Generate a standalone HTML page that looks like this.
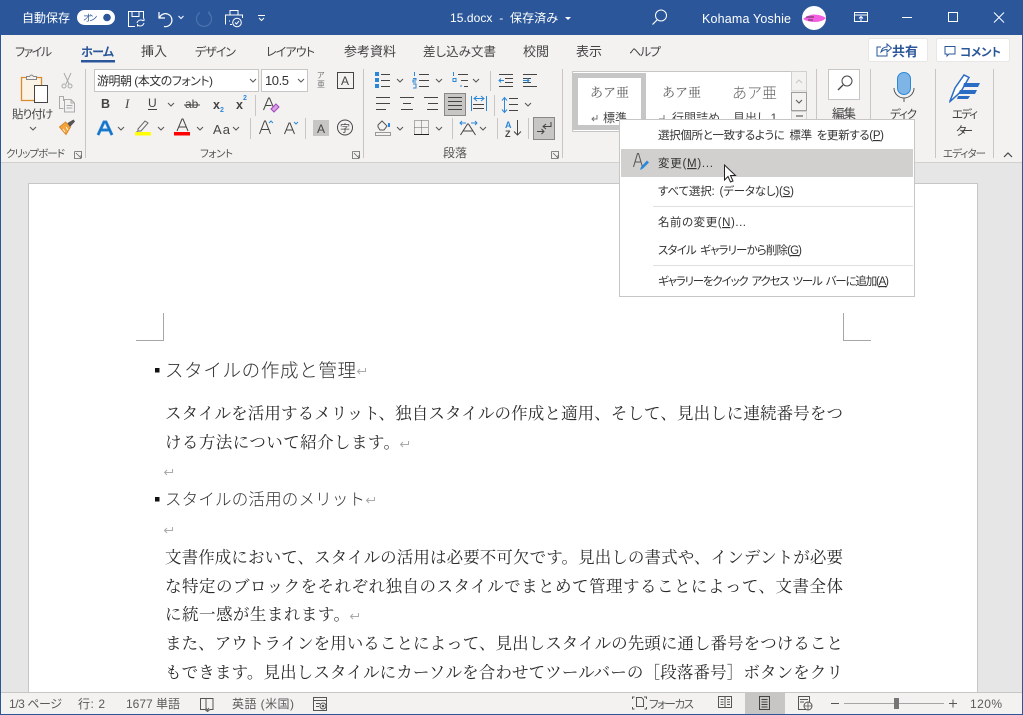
<!DOCTYPE html>
<html lang="ja"><head><meta charset="utf-8"><title>15.docx</title>
<style>
html,body{margin:0;padding:0;width:1023px;height:715px;overflow:hidden;background:#f3f2f1}
svg{display:block;position:absolute;left:0;top:0}
text{font-family:"Liberation Sans","Noto Sans CJK JP",sans-serif;font-size:12px;fill:#444;white-space:pre;font-feature-settings:"palt"}
.w{fill:#fff}
.d{font-family:"Liberation Serif","Noto Serif CJK JP","Noto Serif CJK SC",serif;font-size:16.5px;fill:#2b2b2b;font-feature-settings:normal}
.h{font-family:"Liberation Sans","Noto Sans CJK JP",sans-serif;font-weight:300;fill:#333;font-feature-settings:normal}
.m{fill:#333;font-size:11.5px;word-spacing:2px}
.st{fill:#5a5a5a;font-size:12px}
.gl{font-size:10.5px;fill:#555}
.l{fill:none;stroke:#444;stroke-width:1}
.r{fill:none;stroke:#aaa;stroke-width:1}
.sep{stroke:#c8c6c4;stroke-width:1;fill:none}
</style></head><body>
<svg width="1023" height="715" viewBox="0 0 1023 715" xmlns="http://www.w3.org/2000/svg">
<defs><g id="ret"><path d="M9.500 -6v3.500h-8M4 -5l-2.500 2.500 2.500 2.500" class="r"/></g>
<path id="cv" d="M0 0l3 3 3-3" fill="none" stroke="#555" stroke-width="1"/>
<path id="dl" d="M.5 .5h7v6.500M.5 .5v7h3.500M2 2l5 5M7 4v3.500h-3.500" fill="none" stroke="#666" stroke-width=".8"/></defs>
<!-- backgrounds -->
<rect width="1023" height="715" fill="#f3f2f1"/>
<rect width="1023" height="35" fill="#2b579a"/>
<rect y="162" width="1023" height="1" fill="#d2d0ce"/>
<rect y="163" width="1023" height="529" fill="#e6e6e6"/>
<rect x="28.500" y="183.500" width="949" height="520" fill="#fff" stroke="#c6c6c6"/>

<!-- title bar -->
<text x="22" y="22" class="w" textLength="48">自動保存</text>
<rect x="77" y="10" width="38" height="15" rx="7.500" fill="#fff"/>
<text x="83" y="21" style="font-size:9px;fill:#2b579a" textLength="14">オン</text>
<circle cx="107" cy="17.500" r="3.800" fill="#2b579a"/>
<g fill="none" stroke="#fff" stroke-width="1">
<path d="M135 26.500h-6.500v-15h15v7M132 11.500v5h7v-5"/>
<path d="M137 23a4 4 0 0 1 6.500-2M144 21v-2.500M144 23a4 4 0 0 1-6.500 2M137.500 24v2.500" stroke-width="1"/>
<path d="M159 12v6h6M159.500 17.500a6.500 6.500 0 1 1 4.500 9" stroke-width="1.200"/>
<path d="M178.500 16l2.500 2.500 2.500-2.500"/>
<path d="M208 12.500a7.500 7.500 0 1 1-8 0M209 11.500l1 4" stroke="#4d74b0" stroke-width="1.100"/>
<path d="M230 15v-4.500h8v4.500M225.500 24.500v-9.500h17v3M230 21h-1M230 24.500h2"/>
<circle cx="237" cy="22.500" r="4.300"/><path d="M235 22.500l1.500 1.500 2.500-3"/>
<path d="M258 15.500h7M259 18l2.500 2.500 2.500-2.500"/>
<circle cx="661" cy="15.500" r="5.500"/><path d="M657 20l-4.500 4.500" stroke-width="1.200"/>
<rect x="854.500" y="12.500" width="13" height="9"/><path d="M855 15h12M861 21v-4M859 18.500l2-2 2 2"/>
<path d="M902 17.500h10"/><rect x="948.500" y="12.500" width="9" height="9"/>
<path d="M994 12.500l10 10M1004 12.500l-10 10"/>
</g>
<text x="450" y="22" class="w" style="font-size:12px" textLength="108">15.docx  -  保存済み</text>
<path d="M565 17h6l-3 3z" fill="#fff"/>
<text x="702" y="23" class="w" style="font-size:12.500px" textLength="89">Kohama Yoshie</text>
<circle cx="814" cy="18" r="12" fill="#fff"/>
<path d="M803 19q5-4 10-4.500 8 0 13 3.500-4 4-11 4-7 0-12-3z" fill="#f25fe0"/>
<path d="M806 17h8M808 20h5" stroke="#222" stroke-width=".7"/>

<!-- tabs -->
<g>
<text x="15" y="56" style="font-size:12px" textLength="37">ファイル</text>
<text x="81" y="56" style="font-size:12px;font-weight:700;fill:#2b579a" textLength="33">ホーム</text>
<rect x="81" y="60" width="34" height="2.500" fill="#2b579a"/>
<text x="141" y="56" style="font-size:13px" textLength="26">挿入</text>
<text x="195" y="56" style="font-size:12px" textLength="41">デザイン</text>
<text x="266" y="56" style="font-size:12px" textLength="49">レイアウト</text>
<text x="344" y="56" style="font-size:13px" textLength="52">参考資料</text>
<text x="423" y="56" style="font-size:12.500px" textLength="73">差し込み文書</text>
<text x="523" y="56" style="font-size:13px" textLength="26">校閲</text>
<text x="576" y="56" style="font-size:13px" textLength="26">表示</text>
<text x="629" y="56" style="font-size:12px" textLength="32">ヘルプ</text>
</g>
<rect x="868.500" y="38.500" width="59" height="23" rx="1.500" fill="#fff" stroke="#e8e7e6"/>
<path d="M881 47h-4v9h10v-3M881 52q1-5 6-5v-3l4.500 4-4.500 4v-2.500q-3.500 0-6 2.500z" fill="none" stroke="#2b579a"/>
<text x="892" y="56" style="font-size:13px;font-weight:700;fill:#2b579a" textLength="26">共有</text>
<rect x="936.500" y="38.500" width="73" height="23" rx="1.500" fill="#fff" stroke="#e8e7e6"/>
<path d="M945 46.500h10v7.500h-6l-2 2v-2h-2z" fill="none" stroke="#2b579a"/>
<text x="960" y="56" style="font-size:11.500px;font-weight:700;fill:#2b579a" textLength="41">コメント</text>

<!-- group separators -->
<path d="M85.500 69v89M363.500 69v89M562.500 69v89M816.500 69v89M870.500 69v89M935.500 69v89M993.500 69v89" class="sep"/>

<!-- clipboard -->
<path d="M21.500 77.500h20v23h-20z" fill="#fbf3e6" stroke="#d98b2b" stroke-width="1.300"/>
<path d="M26.500 79v-2.500h3q2-3 4 0h3v3h-10z" fill="#f3f2f1" stroke="#888"/>
<rect x="34.500" y="85.500" width="13" height="17" fill="#fff" stroke="#444"/>
<text x="12" y="118" style="font-size:11.500px" textLength="41">貼り付け</text>
<use href="#cv" x="30" y="127"/>
<path d="M64 73l5 11M71 73l-5 11" stroke="#aaa" fill="none"/><circle cx="64" cy="86" r="2" fill="none" stroke="#aaa"/><circle cx="70" cy="86" r="2" fill="none" stroke="#aaa"/>
<path d="M63.500 101v-4.500h-4v12h4M64.500 99.500h6.500l3.500 3.500v9h-10zM71 99.500v3.500h3.500M66.500 105.500h6M66.500 108h6" fill="none" stroke="#aaa"/>
<path d="M59.500 127l6-5 5 5-4.500 7.500z" fill="#f3a53a" stroke="#d98b2b"/><path d="M63 129l2 3M66 127l2 3" stroke="#fff" stroke-width=".8"/><path d="M67.500 123l6-3.500 1.500 2-5 5.500z" fill="#555"/>
<text x="6" y="157" class="gl" textLength="59">クリップボード</text>
<use href="#dl" x="74" y="151"/>

<!-- font -->
<rect x="94.500" y="69.500" width="164" height="22" fill="#fff" stroke="#c8c6c4"/>
<text x="97" y="85" style="font-size:12px;fill:#333" textLength="116">游明朝 (本文のフォント)</text>
<use href="#cv" x="250" y="79"/>
<rect x="261.500" y="69.500" width="46" height="22" fill="#fff" stroke="#c8c6c4"/>
<text x="265" y="85" style="font-size:13px;fill:#333" textLength="24">10.5</text>
<use href="#cv" x="298" y="79"/>
<text x="317" y="78" style="font-size:8px;fill:#777">ア</text><text x="317" y="87" style="font-size:8px;fill:#777">亜</text>
<rect x="337.500" y="72.500" width="16" height="16" fill="none" stroke="#444"/>
<text x="341" y="85" style="font-size:12px">A</text>
<text x="101" y="108" style="font-size:12.500px;font-weight:700">B</text>
<text x="125" y="108" style="font-family:'Liberation Serif',serif;font-size:13px;font-style:italic">I</text>
<text x="148" y="107" style="font-size:12px">U</text><path d="M148 109.500h9" stroke="#444"/>
<use href="#cv" x="168" y="103"/>
<text x="185" y="108" style="font-size:12px">ab</text><path d="M184 105h16" stroke="#444"/>
<text x="213" y="109" style="font-size:12.500px;font-weight:700">x</text><text x="220" y="112" style="font-size:7px;fill:#2b88d8;font-weight:700">2</text>
<text x="236" y="109" style="font-size:12.500px;font-weight:700">x</text><text x="243" y="100" style="font-size:7px;fill:#2b88d8;font-weight:700">2</text>
<path d="M263.500 110l5-12h1l5 12M265.500 105.500h6" class="l"/><path d="M271 109l5-5 3 3-5 5z" fill="#d9a0e6" stroke="#a347ba"/>
<path d="M98 135l6-13h2l6 13M100.500 130h9" fill="none" stroke="#2b88d8" stroke-width="3"/>
<path d="M98 135l6-13h2l6 13M100.500 130h9" fill="none" stroke="#0e6cbd" stroke-width="1"/>
<use href="#cv" x="118" y="127"/>
<path d="M138 129l7-8 3 2-7 8h-3zM138 131l-1.500 1" fill="none" stroke="#666"/><rect x="135" y="132" width="16" height="3.500" fill="#ffff00"/>
<use href="#cv" x="158" y="127"/>
<path d="M177 131l5-12h1l5 12M178.500 127h8" class="l"/><rect x="174" y="132" width="16" height="3.500" fill="#f00"/>
<use href="#cv" x="197" y="127"/>
<text x="213" y="134" style="font-size:13px" textLength="17">Aa</text>
<use href="#cv" x="233" y="127"/>
<path d="M255.500 95v21M250.500 118v21M305.500 118v21" class="sep"/>
<path d="M259.500 134l5-13h1l5 13M261.500 129.500h8" class="l"/><path d="M269 123l2-2 2 2" fill="none" stroke="#2b88d8"/>
<path d="M284.500 134l4.500-11h1l4.500 11M286 130h7" class="l"/><path d="M294 122l2 2 2-2" fill="none" stroke="#2b88d8"/>
<rect x="313" y="120" width="16" height="16" fill="#c8c6c4"/><text x="317" y="133" style="font-size:12px">A</text>
<circle cx="345" cy="127.500" r="7.500" fill="none" stroke="#444"/><text x="340" y="132" style="font-size:10px">字</text>
<text x="200" y="157" class="gl" textLength="33">フォント</text>
<use href="#dl" x="352" y="151"/>

<!-- paragraph -->
<g>
<path d="M375 72h4v4h-4zM375 78h4v4h-4zM375 84h4v4h-4z" fill="#2b88d8"/>
<path d="M381 74.500h9M381 80.500h9M381 86.500h9M419 74.500h10M419 80.500h10M419 86.500h10M458 74.500h10M461 80.500h7M464 86.500h4" class="l"/>
<path d="M414.500 72v4M413 78.500h3v1.500h-3v2h3M413 84h3v4h-3" stroke="#2b88d8" fill="none"/>
<path d="M453.500 72v4" stroke="#2b88d8"/><path d="M453 78.500h3v3h-3zM461 85v2" stroke="#2b88d8" fill="none"/>
<use href="#cv" x="397" y="79"/><use href="#cv" x="436" y="79"/><use href="#cv" x="473" y="79"/>
<path d="M490.500 71v20" class="sep"/>
<path d="M499 74.500h14M505 78.500h8M505 82.500h8M499 86.500h14M523 74.500h14M523 78.500h8M523 82.500h8M523 86.500h14" class="l"/>
<path d="M499 80.500h5M501 78.500l-2 2 2 2" stroke="#2b88d8" fill="none"/><path d="M523 80.500h6M527 78.500l2 2-2 2" stroke="#2b88d8" fill="none"/>
<rect x="444.500" y="93.500" width="21" height="22" fill="#c8c6c4" stroke="#8a8886"/>
<path d="M376 97.500h14M376 103.500h14M376 109.500h10M400 97.500h14M403 103.500h8M401 109.500h12M424 97.500h14M428 103.500h10M427 109.500h11M448 97.500h14M448 101.500h14M448 105.500h14M448 109.500h14" class="l"/>
<path d="M471.500 96v15M486.500 96v15" stroke="#2b88d8"/><path d="M474 98.500h10M477 96l-3 2.500 3 2.500M481 96l3 2.500-3 2.500" fill="none" stroke="#2b88d8"/>
<path d="M473 104.500h11M473 108.500h11" class="l"/>
<path d="M494.500 95v21" class="sep"/>
<path d="M504.500 98v14M502 100.500l2.500-3 2.500 3M502 109.500l2.500 3 2.500-3" fill="none" stroke="#2b88d8"/>
<path d="M509 98.500h9M509 104.500h9M509 110.500h9" class="l"/>
<use href="#cv" x="525" y="103"/>
<path d="M378 125l4-4 5 5-3 4h-4l-2-3z" fill="none" stroke="#555"/><path d="M389 123v4" stroke="#2b88d8" stroke-width="2"/>
<rect x="375.500" y="132.500" width="15" height="3" fill="#f3f2f1" stroke="#999"/>
<use href="#cv" x="397" y="127"/>
<path d="M414.500 120.500h14v14h-14zM421.500 120.500v14M414.500 127.500h14" fill="none" stroke="#666" stroke-dasharray="1 1"/><path d="M414 134.500h15" stroke="#222"/>
<use href="#cv" x="436" y="127"/>
<path d="M452.500 118v21" class="sep"/>
<path d="M460.500 135l7-11h1l7 11M463.500 131h9" class="l"/><path d="M460 123h6M471 123h6" stroke="#2b88d8"/><path d="M462 121l-2 2 2 2M475 121l2 2-2 2" fill="none" stroke="#2b88d8"/>
<use href="#cv" x="480" y="127"/>
<path d="M497.500 118v21" class="sep"/>
<text x="505" y="128" style="font-size:9px;font-weight:700;fill:#2b88d8">A</text><text x="505" y="137" style="font-size:9px;font-weight:700">Z</text>
<path d="M517.500 120v15M514 131.500l3.500 3.500 3.500-3.500" fill="none" stroke="#444"/>
<path d="M528.500 118v21" class="sep"/>
<rect x="533.500" y="117.500" width="21" height="22" fill="#c8c6c4" stroke="#8a8886"/>
<path d="M551 122v4.500h-7M546 124l-3 2.500 3 2.500M537 131.500h7M541.500 129l2.500 2.500-2.500 2.500" fill="none" stroke="#444"/>
<text x="443" y="157" style="font-size:12px;fill:#555" textLength="24">段落</text>
<use href="#dl" x="551" y="151"/>
</g>

<!-- gallery -->
<rect x="572.500" y="71.500" width="234" height="60" fill="#fff" stroke="#c8c6c4"/>
<rect x="575.500" y="75.500" width="68" height="52" fill="#fff" stroke="#c6c6c6" stroke-width="5"/>
<text x="590" y="97" class="d" style="font-size:13px;fill:#555">あア亜</text>
<text x="662" y="97" class="d" style="font-size:13px;fill:#555">あア亜</text>
<text x="732" y="98" class="h" style="font-size:15px;fill:#666">あア亜</text>
<path d="M597 115v4h-5M594 117l-2 2 2 2" fill="none" stroke="#777"/><text x="603" y="122" style="font-size:12px" textLength="24">標準</text>
<path d="M664 115v4h-5" fill="none" stroke="#777"/><text x="672" y="122" style="font-size:12px">行間詰め</text>
<text x="733" y="122" style="font-size:12px">見出し 1</text>
<rect x="791.500" y="71.500" width="15" height="19.500" fill="#f3f2f1" stroke="#d2d0ce"/><path d="M796 83l3-3 3 3" fill="none" stroke="#c8c6c4"/>
<rect x="791.500" y="92.500" width="15" height="18" fill="#f3f2f1" stroke="#a19f9d"/><use href="#cv" x="796" y="100"/>
<rect x="791.500" y="111.500" width="15" height="18" fill="#f3f2f1" stroke="#d2d0ce"/><path d="M796 116h7" stroke="#444"/>

<!-- right groups -->
<rect x="828.500" y="69.500" width="31" height="30" fill="#fff" stroke="#c8c6c4"/>
<circle cx="847" cy="81" r="5" fill="none" stroke="#444"/><path d="M843 85l-5 5" stroke="#444" stroke-width="1.300"/>
<text x="832" y="118" style="font-size:12.500px" textLength="24">編集</text>
<rect x="897.500" y="72.500" width="13" height="22" rx="6.500" fill="#7fb5e6" stroke="#2b88d8"/>
<path d="M894 88a10 10 0 0 0 20 0M904 98v4" fill="none" stroke="#555"/>
<text x="890" y="118" style="font-size:11.500px" textLength="27">ディク</text>
<path d="M950 101l5-13 9-13 5 2.500-8 14-11 10z" fill="#fff" stroke="#2b6cc4" stroke-width="1.500"/>
<path d="M964 83h16l-2 4h-15zM960 90h17l-2 4h-17zM958 96h12l-2 3h-11z" fill="#2b6cc4"/>
<text x="952" y="118" style="font-size:11.500px" textLength="26">エディ</text>
<text x="956" y="135" style="font-size:12px" textLength="17">ター</text>
<text x="943" y="157" class="gl" textLength="43">エディター</text>
<path d="M1004 157l4-4 4 4" fill="none" stroke="#444" stroke-width="1.200"/>

<!-- page crop marks -->
<path d="M163.500 313v27.500H136M843.500 313v27.500H871" fill="none" stroke="#a6a6a6"/>

<!-- document -->
<rect x="155" y="368" width="4.500" height="4.500" fill="#111"/>
<text x="165" y="377" class="h" style="font-size:18.500px" textLength="191">スタイルの作成と管理</text>
<use href="#ret" x="356" y="374"/>
<text x="165" y="419" class="d" textLength="678">スタイルを活用するメリット、独自スタイルの作成と適用、そして、見出しに連続番号をつ</text>
<text x="165" y="448" class="d" textLength="235">ける方法について紹介します。</text>
<use href="#ret" x="399" y="447"/>
<use href="#ret" x="163" y="475"/>
<rect x="155" y="497" width="4.500" height="4.500" fill="#111"/>
<text x="165" y="505" class="h" style="font-size:16.500px" textLength="200">スタイルの活用のメリット</text>
<use href="#ret" x="365" y="503"/>
<use href="#ret" x="163" y="533"/>
<text x="165" y="563" class="d" textLength="678">文書作成において、スタイルの活用は必要不可欠です。見出しの書式や、インデントが必要</text>
<text x="165" y="592" class="d" textLength="678">な特定のブロックをそれぞれ独自のスタイルでまとめて管理することによって、文書全体</text>
<text x="165" y="620" class="d" textLength="185">に統一感が生まれます。</text>
<use href="#ret" x="349" y="619"/>
<text x="165" y="649" class="d" textLength="678">また、アウトラインを用いることによって、見出しスタイルの先頭に通し番号をつけること</text>
<text x="165" y="678" class="d" textLength="678">もできます。見出しスタイルにカーソルを合わせてツールバーの［段落番号］ボタンをクリ</text>

<!-- status bar -->
<rect y="692" width="1023" height="22" fill="#f3f2f1"/>
<rect y="692" width="1023" height="1" fill="#c8c6c4"/>
<rect y="714" width="1023" height="1" fill="#2b579a"/>
<rect x="0" y="35" width="1" height="680" fill="#2b579a"/>
<rect x="1022" y="35" width="1" height="680" fill="#2b579a"/>
<text x="9" y="708" class="st" textLength="53">1/3 ページ</text>
<text x="78" y="708" class="st" textLength="27">行: 2</text>
<text x="126" y="708" class="st" textLength="54">1677 単語</text>
<path d="M200.500 698.500h12.500v11h-3l-2.500 2-2.500-2h-4.500zM206 698.500v11M206 708l1.500 2 1.500-2" fill="none" stroke="#555"/>
<text x="232" y="708" class="st" textLength="62">英語 (米国)</text>
<path d="M313.500 697.500h13v13h-13zM314 700.500h12M316 703.500h4M316 706.500h3" fill="none" stroke="#555"/><circle cx="323" cy="706" r="3" fill="none" stroke="#555"/><circle cx="323" cy="706" r="1.300" fill="#555"/>
<path d="M632.500 699v-2h2M644 697h2.500v2M632.500 707v2h2M646.500 707v2h-2M636.500 706.500v-9h5l2 2v7z" fill="none" stroke="#555"/>
<text x="649" y="708" style="font-size:11.500px;fill:#5a5a5a" textLength="45">フォーカス</text>
<path d="M718.500 696.500h6l.5 1 .5-1h6v11h-13zM725 697v11M720.500 699.500h3M720.500 702h3M720.500 704.500h3M727 699.500h3M727 702h3M727 704.500h3" fill="none" stroke="#555"/>
<rect x="745" y="693" width="40" height="21" fill="#c8c6c4"/>
<path d="M759.500 696.500h10v13h-10zM761.500 699.500h6M761.500 702h6M761.500 704.500h6M761.500 707h6" fill="none" stroke="#444"/>
<path d="M798.500 696.500h11v13h-11zM800 699.500h8M800 702h4" fill="none" stroke="#555"/><circle cx="808" cy="706" r="4" fill="#f3f2f1" stroke="#555"/><path d="M804 706h8M808 702v8" stroke="#555" stroke-width=".8"/>
<path d="M831 703.500h8M949 703.500h8M953 699.500v8" stroke="#555"/>
<path d="M844 703.500h100" stroke="#a6a6a6"/>
<rect x="894" y="698" width="5" height="11" fill="#767676"/>
<text x="970" y="708" class="st" textLength="32">120%</text>

<!-- context menu -->
<rect x="619.500" y="119.500" width="295" height="177" fill="#fff" stroke="#c8c6c4"/>
<rect x="621" y="149" width="292" height="28" fill="#d2d0ce"/>
<path d="M653 206.500h260M653 265.500h260" stroke="#e1dfdd"/>
<text x="658" y="139" class="m" textLength="226">選択個所と一致するように 標準 を更新する(<tspan text-decoration="underline">P</tspan>)</text>
<text x="658" y="167" class="m" textLength="55">変更(<tspan text-decoration="underline">M</tspan>)...</text>
<text x="658" y="195" class="m" textLength="136">すべて選択: (データなし)(<tspan text-decoration="underline">S</tspan>)</text>
<text x="658" y="226" class="m" textLength="88">名前の変更(<tspan text-decoration="underline">N</tspan>)...</text>
<text x="658" y="254" class="m" textLength="144">スタイル ギャラリーから削除(<tspan text-decoration="underline">G</tspan>)</text>
<text x="658" y="285" class="m" textLength="231">ギャラリーをクイック アクセス ツール バーに追加(<tspan text-decoration="underline">A</tspan>)</text>
<path d="M633.500 167l4-13.500h1l4 13.500M635 162h6" fill="none" stroke="#555"/>
<path d="M640 170l1-3 6-6.500 2 2-6 6z" fill="#2b88d8"/>
<path d="M724.500 165v15l3.500-3.500 2.500 5.500 2.500-1-2.500-5.500h5z" fill="#fff" stroke="#222" stroke-width="1"/>
</svg>
</body></html>
